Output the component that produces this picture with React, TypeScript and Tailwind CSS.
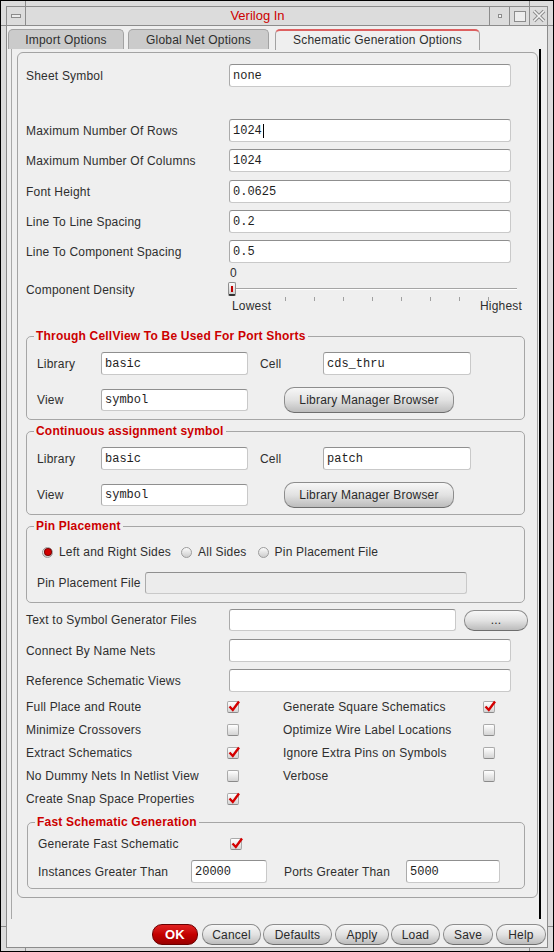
import React from "react";

type FieldProps = {
  value?: string;
  w: string;
  h?: string;
  cursor?: boolean;
  disabled?: boolean;
};

function Field({ value = "", w, h = "h-[23px]", cursor, disabled }: FieldProps) {
  return (
    <div
      className={`${w} ${h} shrink-0 flex items-center rounded-[3px] border border-[#c9c9c9] border-t-[#8f8f8f] border-l-[#ababab] px-[3px] font-['Liberation_Mono',monospace] tracking-normal text-[12px] text-[#1e1e1e] ${
        disabled ? "bg-[#ececec]" : "bg-white"
      }`}
    >
      {value}
      {cursor && <span className="ml-px h-[14px] w-px bg-black" />}
    </div>
  );
}

function Btn({ label, cls }: { label: string; cls: string }) {
  return (
    <div
      className={`${cls} shrink-0 flex items-center justify-center rounded-[10px] border border-[#8d8d8d] border-b-[#6e6e6e] bg-linear-to-b from-[#f7f7f7] via-[#e2e2e2] to-[#bcbcbc] text-[12px] text-[#2a2a2a]`}
    >
      {label}
    </div>
  );
}

function Check({ on }: { on?: boolean }) {
  return (
    <div className="relative w-[12px] h-[12px] shrink-0 rounded-[2px] border border-[#aaaaaa] border-b-[#8a8a8a] bg-linear-to-b from-white to-[#d4d4d4]">
      {on && (
        <svg
          className="absolute -top-[2px] left-0 overflow-visible"
          width="13"
          height="13"
          viewBox="0 0 13 13"
        >
          <path d="M1.5 6.5 L4.8 10 L11 1.5" fill="none" stroke="#d40000" strokeWidth="2.4" />
        </svg>
      )}
    </div>
  );
}

function Radio({ on }: { on?: boolean }) {
  return (
    <div className="w-[11px] h-[11px] shrink-0 rounded-full border border-[#9c9c9c] bg-linear-to-b from-[#fbfbfb] to-[#cdcdcd] flex items-center justify-center">
      {on && <div className="w-[6px] h-[6px] rounded-full bg-[#d40000] ring-1 ring-[#7a0000]" />}
    </div>
  );
}

function Row({ label, mt, children }: { label: string; mt: string; children: React.ReactNode }) {
  return (
    <div className={`${mt} flex items-center h-[23px]`}>
      <span className="w-[203px] shrink-0">{label}</span>
      {children}
    </div>
  );
}

function Group({
  title,
  cls,
  children,
}: {
  title: string;
  cls: string;
  children: React.ReactNode;
}) {
  return (
    <fieldset className={`${cls} border border-[#a6a6a6] rounded-[5px] pl-[10px]`}>
      <legend className="-ml-[3px] px-[2px] text-[12px] leading-[14px] font-bold text-[#cc0000]">
        {title}
      </legend>
      {children}
    </fieldset>
  );
}

function CheckRow({
  left,
  leftOn,
  right,
  rightOn,
  mt,
}: {
  left: string;
  leftOn?: boolean;
  right?: string;
  rightOn?: boolean;
  mt: string;
}) {
  return (
    <div className={`${mt} flex items-center h-[16px]`}>
      <span className="w-[201px] shrink-0">{left}</span>
      <Check on={leftOn} />
      {right && (
        <>
          <span className="ml-[44px] w-[200px] shrink-0">{right}</span>
          <Check on={rightOn} />
        </>
      )}
    </div>
  );
}

export default function App() {
  return (
    <div className="relative w-[554px] h-[952px] border border-black bg-[#dcdcdc] pt-[5px] px-[5px] pb-[3px] font-['Liberation_Sans',Arial,sans-serif] tracking-[0.2px] text-[12px] text-[#2e2e2e] overflow-hidden">
      {/* frame resize ticks */}
      <div className="absolute left-[24px] top-0 h-[6px] w-px bg-[#8c8c8c]" />
      <div className="absolute left-[528px] top-0 h-[6px] w-px bg-[#8c8c8c]" />
      <div className="absolute left-[24px] bottom-0 h-[4px] w-px bg-[#8c8c8c]" />
      <div className="absolute left-[528px] bottom-0 h-[4px] w-px bg-[#8c8c8c]" />
      <div className="absolute left-0 top-[24px] w-[6px] h-px bg-[#8c8c8c]" />
      <div className="absolute right-0 top-[24px] w-[6px] h-px bg-[#8c8c8c]" />
      <div className="absolute left-0 top-[925px] w-[6px] h-px bg-[#8c8c8c]" />
      <div className="absolute right-0 top-[925px] w-[6px] h-px bg-[#8c8c8c]" />

      <div className="h-full border border-[#8c8c8c] flex flex-col bg-[#efefef]">
        {/* title bar */}
        <div className="h-[19px] shrink-0 flex border-b border-[#8c8c8c] bg-[#dcdcdc]">
          <div className="w-[19px] border-r border-[#8c8c8c] flex items-center justify-center">
            <div className="w-[10px] h-[4px] border border-[#8c8c8c] bg-[#ececec]" />
          </div>
          <div className="flex-1 text-center text-[13px] leading-[18px] tracking-normal text-[#cc0000]">
            Verilog In
          </div>
          <div className="w-[20px] border-l border-[#8c8c8c] flex items-center justify-center">
            <div className="w-[4px] h-[4px] border border-[#8c8c8c] bg-[#f4f4f4]" />
          </div>
          <div className="w-[20px] border-l border-[#8c8c8c] flex items-center justify-center">
            <div className="w-[12px] h-[11px] border border-[#8c8c8c] bg-[#ededed]" />
          </div>
          <div className="w-[18px] border-l border-[#8c8c8c] flex items-center justify-center">
            <svg width="14" height="14" viewBox="0 0 14 14">
              <path d="M2 2 L12 12 M12 2 L2 12" stroke="#8c8c8c" strokeWidth="3.6" />
              <path d="M2 2 L12 12 M12 2 L2 12" stroke="#f2f2f2" strokeWidth="1.6" />
            </svg>
          </div>
        </div>

        {/* tabs */}
        <div className="flex items-end h-[20px] mt-[3px] ml-px shrink-0">
          <div className="w-[116px] h-[20px] rounded-t-[5px] border border-b-0 border-[#a2a2a2] bg-[#cbcbcb] flex items-center justify-center">
            Import Options
          </div>
          <div className="ml-[4px] w-[141px] h-[20px] rounded-t-[5px] border border-b-0 border-[#a2a2a2] bg-[#cbcbcb] flex items-center justify-center">
            Global Net Options
          </div>
          <div className="ml-[6px] w-[205px] h-[21px] -mb-px relative z-10 rounded-t-[5px] border border-b-0 border-[#a2a2a2] border-t-2 border-t-[#dd6060] bg-[#efefef] flex items-center justify-center pb-[2px]">
            Schematic Generation Options
          </div>
        </div>

        {/* tab page */}
        <div className="ml-[4px] w-[530px] h-[870px] shrink-0 border-l border-[#a8a8a8] border-r-2 border-r-black">
          <div className="mt-[3px] ml-[5px] w-[521px] h-[846px] rounded-[6px] border border-[#a3a3a3] pl-[8px] flex flex-col">
            <Row label="Sheet Symbol" mt="mt-[11px]">
              <Field w="w-[282px]" value="none" />
            </Row>
            <Row label="Maximum Number Of Rows" mt="mt-[32px]">
              <Field w="w-[282px]" value="1024" cursor />
            </Row>
            <Row label="Maximum Number Of Columns" mt="mt-[7px]">
              <Field w="w-[282px]" value="1024" />
            </Row>
            <Row label="Font Height" mt="mt-[8px]">
              <Field w="w-[282px]" value="0.0625" />
            </Row>
            <Row label="Line To Line Spacing" mt="mt-[7px]">
              <Field w="w-[282px]" value="0.2" />
            </Row>
            <Row label="Line To Component Spacing" mt="mt-[7px]">
              <Field w="w-[282px]" value="0.5" />
            </Row>

            {/* slider */}
            <div className="mt-px flex h-[49px]">
              <div className="w-[203px] shrink-0 flex items-center pt-[3px]">Component Density</div>
              <div className="w-[294px] flex flex-col">
                <div className="mt-[2px] h-[14px] leading-[14px] pl-px">0</div>
                <div className="mt-[2px] h-[14px] flex items-center">
                  <div className="-ml-px w-[8px] h-[14px] shrink-0 rounded-[2px] border border-[#8e8e8e] border-b-2 border-b-[#333] bg-linear-to-b from-[#fafafa] to-[#cfcfcf] flex items-center justify-center">
                    <div className="w-[2px] h-[6px] bg-[#c00000]" />
                  </div>
                  <div className="flex-1 mr-[6px] h-[2px] border-t border-[#a5a5a5] border-b border-b-white" />
                </div>
                <div className="mt-px h-[4px] flex pl-[56px] gap-[28px]">
                  {[0, 1, 2, 3, 4, 5, 6, 7].map((i) => (
                    <div key={i} className="w-px h-[4px] bg-[#a0a0a0]" />
                  ))}
                </div>
                <div className="-mt-[2px] h-[14px] leading-[14px] flex justify-between pl-[3px] pr-px">
                  <span>Lowest</span>
                  <span>Highest</span>
                </div>
              </div>
            </div>

            <Group title="Through CellView To Be Used For Port Shorts" cls="mt-[16px] w-[499px] pb-[6px]">
              <div className="mt-[9px] flex items-center h-[23px]">
                <span className="w-[64px] shrink-0">Library</span>
                <Field w="w-[147px]" value="basic" />
                <span className="ml-[12px] w-[63px] shrink-0">Cell</span>
                <Field w="w-[148px]" value="cds_thru" />
              </div>
              <div className="mt-[12px] flex items-center h-[26px]">
                <span className="w-[64px] shrink-0">View</span>
                <Field w="w-[147px]" h="h-[22px]" value="symbol" />
                <Btn cls="ml-[36px] w-[170px] h-[26px]" label="Library Manager Browser" />
              </div>
            </Group>

            <Group title="Continuous assignment symbol" cls="mt-[4px] w-[499px] pb-[6px]">
              <div className="mt-[9px] flex items-center h-[23px]">
                <span className="w-[64px] shrink-0">Library</span>
                <Field w="w-[147px]" value="basic" />
                <span className="ml-[12px] w-[63px] shrink-0">Cell</span>
                <Field w="w-[148px]" value="patch" />
              </div>
              <div className="mt-[12px] flex items-center h-[26px]">
                <span className="w-[64px] shrink-0">View</span>
                <Field w="w-[147px]" h="h-[22px]" value="symbol" />
                <Btn cls="ml-[36px] w-[170px] h-[26px]" label="Library Manager Browser" />
              </div>
            </Group>

            <Group title="Pin Placement" cls="mt-[4px] w-[499px] pb-[8px]">
              <div className="mt-[11px] ml-[5px] flex items-center h-[16px]">
                <Radio on />
                <span className="ml-[6px]">Left and Right Sides</span>
                <div className="ml-[10px]">
                  <Radio />
                </div>
                <span className="ml-[6px]">All Sides</span>
                <div className="ml-[11px]">
                  <Radio />
                </div>
                <span className="ml-[6px]">Pin Placement File</span>
              </div>
              <div className="mt-[12px] flex items-center h-[22px]">
                <span className="w-[108px] shrink-0">Pin Placement File</span>
                <Field w="w-[322px]" h="h-[22px]" disabled />
              </div>
            </Group>

            <div className="mt-[6px] flex items-center h-[22px]">
              <span className="w-[203px] shrink-0">Text to Symbol Generator Files</span>
              <Field w="w-[227px]" h="h-[22px]" />
              <Btn cls="ml-[8px] w-[64px] h-[21px] text-[10px]" label="..." />
            </div>
            <Row label="Connect By Name Nets" mt="mt-[8px]">
              <Field w="w-[282px]" />
            </Row>
            <Row label="Reference Schematic Views" mt="mt-[7px]">
              <Field w="w-[282px]" />
            </Row>

            <CheckRow mt="mt-[7px]" left="Full Place and Route" leftOn right="Generate Square Schematics" rightOn />
            <CheckRow mt="mt-[7px]" left="Minimize Crossovers" right="Optimize Wire Label Locations" />
            <CheckRow mt="mt-[7px]" left="Extract Schematics" leftOn right="Ignore Extra Pins on Symbols" />
            <CheckRow mt="mt-[7px]" left="No Dummy Nets In Netlist View" right="Verbose" />
            <CheckRow mt="mt-[7px]" left="Create Snap Space Properties" leftOn />

            <Group title="Fast Schematic Generation" cls="mt-[8px] ml-px w-[498px] pb-[5px]">
              <div className="mt-[7px] flex items-center h-[16px]">
                <span className="w-[192px] shrink-0">Generate Fast Schematic</span>
                <Check on />
              </div>
              <div className="mt-[8px] flex items-center h-[23px]">
                <span className="w-[153px] shrink-0">Instances Greater Than</span>
                <Field w="w-[76px]" value="20000" />
                <span className="ml-[17px] w-[122px] shrink-0">Ports Greater Than</span>
                <Field w="w-[94px]" value="5000" />
              </div>
            </Group>
          </div>
        </div>

        {/* bottom buttons */}
        <div className="mt-[5px] h-[21px] flex justify-end pr-px shrink-0">
          <div className="w-[46px] h-[21px] flex items-center justify-center rounded-[10px] border border-[#6a0000] bg-linear-to-b from-[#e02020] via-[#c40000] to-[#9a0000] text-white font-bold text-[13px]">
            OK
          </div>
          <Btn cls="ml-[4px] w-[59px] h-[21px]" label="Cancel" />
          <Btn cls="ml-[2px] w-[69px] h-[21px]" label="Defaults" />
          <Btn cls="ml-[3px] w-[54px] h-[21px]" label="Apply" />
          <Btn cls="ml-[2px] w-[49px] h-[21px]" label="Load" />
          <Btn cls="ml-[3px] w-[50px] h-[21px]" label="Save" />
          <Btn cls="ml-[3px] w-[50px] h-[21px]" label="Help" />
        </div>
      </div>
    </div>
  );
}
